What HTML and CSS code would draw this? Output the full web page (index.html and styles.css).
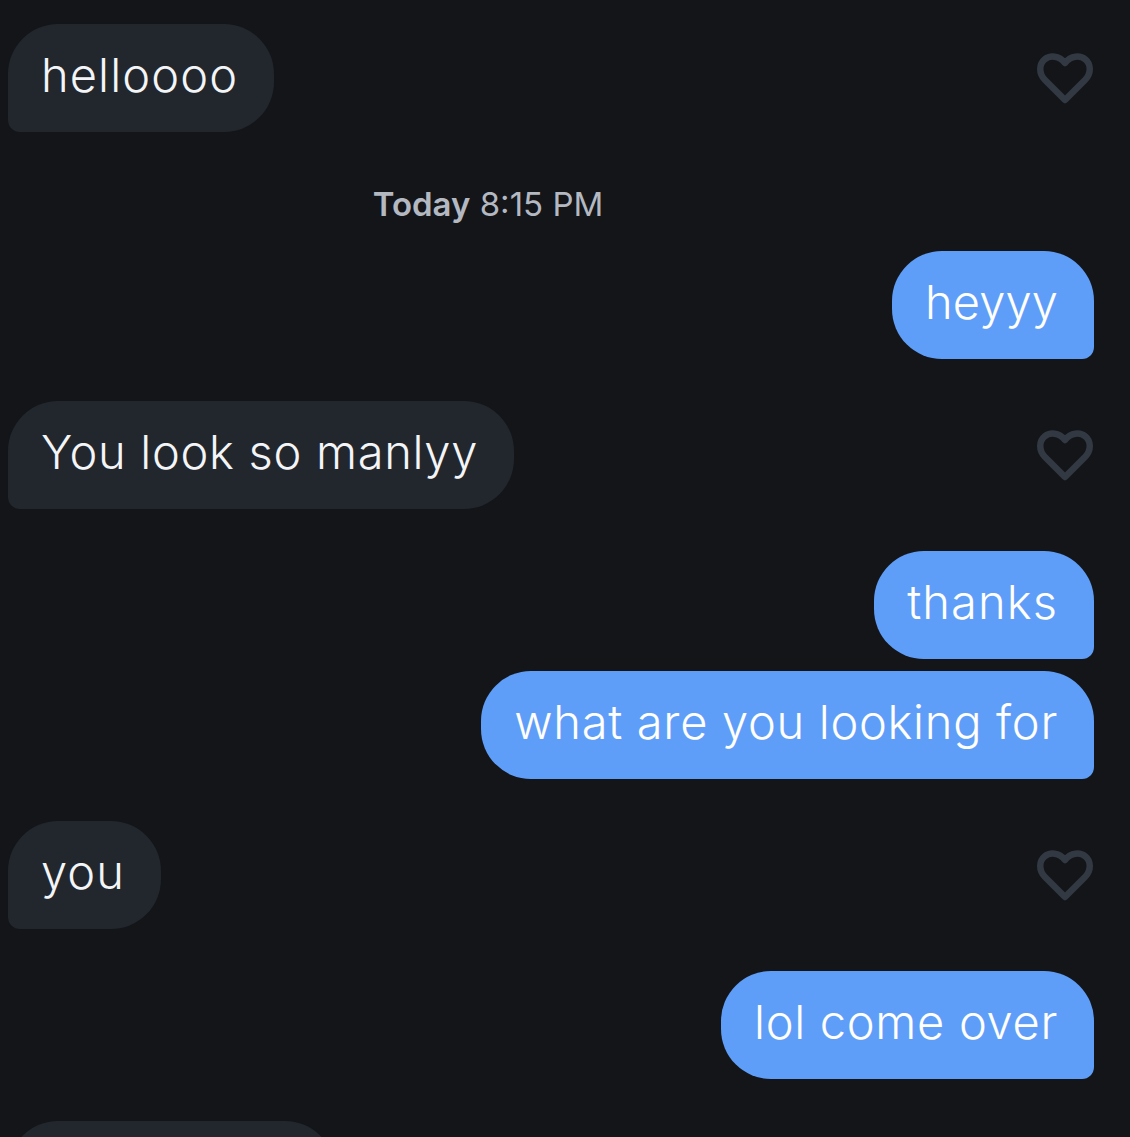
FILE: index.html
```html
<!DOCTYPE html>
<html lang="en">
<head>
<meta charset="utf-8">
<title>Messages</title>
<link rel="stylesheet" href="styles.css">
</head>
<body>
<main class="thread">
  <div class="row row-in">
    <div class="bubble in track-wide">helloooo</div>
    <svg class="heart" viewBox="0 -1 58 54"><path d="M29 48 L9 28 C2.5 21.5 3 12 8.5 7.5 C14 3 23 3.5 29 11 C35 3.5 44 3 49.5 7.5 C55 12 55.5 21.5 49 28 Z"/></svg>
  </div>
  <div class="stamp"><b>Today</b> 8:15 PM</div>
  <div class="row row-out first-out">
    <div class="bubble out track-tight">heyyy</div>
  </div>
  <div class="row row-in group">
    <div class="bubble in">You look so manlyy</div>
    <svg class="heart" viewBox="0 -1 58 54"><path d="M29 48 L9 28 C2.5 21.5 3 12 8.5 7.5 C14 3 23 3.5 29 11 C35 3.5 44 3 49.5 7.5 C55 12 55.5 21.5 49 28 Z"/></svg>
  </div>
  <div class="row row-out group">
    <div class="bubble out track-wide">thanks</div>
  </div>
  <div class="row row-out same">
    <div class="bubble out">what are you looking for</div>
  </div>
  <div class="row row-in group">
    <div class="bubble in track-wide">you</div>
    <svg class="heart" viewBox="0 -1 58 54"><path d="M29 48 L9 28 C2.5 21.5 3 12 8.5 7.5 C14 3 23 3.5 29 11 C35 3.5 44 3 49.5 7.5 C55 12 55.5 21.5 49 28 Z"/></svg>
  </div>
  <div class="row row-out group">
    <div class="bubble out">lol come over</div>
  </div>
  <div class="row row-in group">
    <div class="bubble in partial"></div>
  </div>
</main>
</body>
</html>
```
FILE: styles.css
```css
html, body {
  margin: 0;
  height: 100%;
  overflow: hidden;
  background: #131519;
}
.thread {
  display: flex;
  flex-direction: column;
  height: 1137px;
  box-sizing: border-box;
  padding: 24px 36px 0 8px;
  overflow: hidden;
  font-family: "Inter", "Liberation Sans", sans-serif;
}
.row {
  display: flex;
  align-items: center;
  flex: none;
}
.row-in { justify-content: space-between; }
.row-out { justify-content: flex-end; }
.group { margin-top: 42px; }
.same { margin-top: 12px; }
.first-out { margin-top: 25px; }
.bubble {
  box-sizing: border-box;
  height: 108px;
  padding: 0 36px 0 33px;
  border-radius: 50px;
  font-size: 47px;
  font-weight: 300;
  letter-spacing: 0.7px;
  line-height: 102px;
  white-space: nowrap;
  color: #f4f5f7;
}
.track-wide { letter-spacing: 1.1px; }
.track-tight { letter-spacing: 0.1px; }
.in {
  background: #22272e;
  border-bottom-left-radius: 12px;
}
.out {
  background: #5f9ef8;
  color: #fff;
  border-bottom-right-radius: 12px;
}
.partial { width: 327px; }
.heart {
  width: 58px;
  height: 54px;
  fill: none;
  stroke: #323943;
  stroke-width: 6.5;
  stroke-linejoin: round;
}
.stamp {
  margin: 50px 0 0;
  width: 960px;
  text-align: center;
  font-size: 33px;
  line-height: 44px;
  color: #b4b8c1;
}
.stamp b { font-weight: 600; }
```
